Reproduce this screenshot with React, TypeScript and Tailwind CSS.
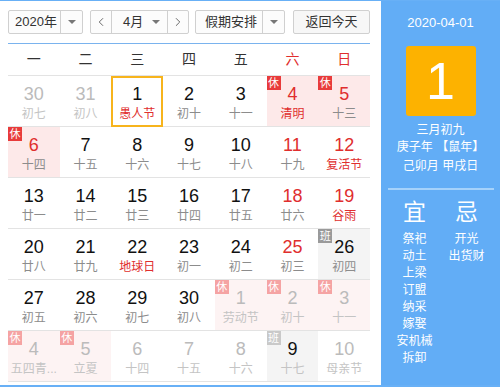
import { ChevronLeft, ChevronRight } from "lucide-react";

type Cell = {
  d: number;
  l: string;
  other?: boolean;
  redNum?: boolean;
  redLunar?: boolean;
  badge?: "休" | "班";
  today?: boolean;
  dark?: boolean;
};

const rows: Cell[][] = [
  [
    { d: 30, l: "初七", other: true },
    { d: 31, l: "初八", other: true },
    { d: 1, l: "愚人节", today: true, redLunar: true },
    { d: 2, l: "初十" },
    { d: 3, l: "十一" },
    { d: 4, l: "清明", badge: "休", redNum: true, redLunar: true },
    { d: 5, l: "十三", badge: "休", redNum: true },
  ],
  [
    { d: 6, l: "十四", badge: "休", redNum: true },
    { d: 7, l: "十五" },
    { d: 8, l: "十六" },
    { d: 9, l: "十七" },
    { d: 10, l: "十八" },
    { d: 11, l: "十九", redNum: true },
    { d: 12, l: "复活节", redNum: true, redLunar: true },
  ],
  [
    { d: 13, l: "廿一" },
    { d: 14, l: "廿二" },
    { d: 15, l: "廿三" },
    { d: 16, l: "廿四" },
    { d: 17, l: "廿五" },
    { d: 18, l: "廿六", redNum: true },
    { d: 19, l: "谷雨", redNum: true, redLunar: true },
  ],
  [
    { d: 20, l: "廿八" },
    { d: 21, l: "廿九" },
    { d: 22, l: "地球日", redLunar: true },
    { d: 23, l: "初一" },
    { d: 24, l: "初二" },
    { d: 25, l: "初三", redNum: true },
    { d: 26, l: "初四", badge: "班" },
  ],
  [
    { d: 27, l: "初五" },
    { d: 28, l: "初六" },
    { d: 29, l: "初七" },
    { d: 30, l: "初八" },
    { d: 1, l: "劳动节", other: true, badge: "休" },
    { d: 2, l: "初十", other: true, badge: "休" },
    { d: 3, l: "十一", other: true, badge: "休" },
  ],
  [
    { d: 4, l: "五四青...", other: true, badge: "休" },
    { d: 5, l: "立夏", other: true, badge: "休" },
    { d: 6, l: "十四", other: true },
    { d: 7, l: "十五", other: true },
    { d: 8, l: "十六", other: true },
    { d: 9, l: "十七", other: true, badge: "班", dark: true },
    { d: 10, l: "母亲节", other: true },
  ],
];

const weekdays = ["一", "二", "三", "四", "五", "六", "日"];
const yi = ["祭祀", "动土", "上梁", "订盟", "纳采", "嫁娶", "安机械", "拆卸"];
const ji = ["开光", "出货财"];

function Caret() {
  return <span className="w-0 h-0 border-l-[4px] border-r-[4px] border-t-[4px] border-l-transparent border-r-transparent border-t-[#777]" />;
}

function DayCell({ c }: { c: Cell }) {
  let bg = "";
  if (c.badge === "休") bg = c.other ? "bg-[#fdf3f3]" : "bg-[#fde9e9]";
  if (c.badge === "班") bg = "bg-[#f4f4f4]";

  let num = "text-[#111]";
  if (c.other && !c.dark) num = "text-[#bbbbbb]";
  else if (c.redNum) num = "text-[#e02e2e]";

  let lunar = "text-[#8c8c8c]";
  if (c.other) lunar = "text-[#c4c4c4]";
  else if (c.redLunar) lunar = "text-[#e02e2e]";

  let badge = "";
  if (c.badge === "休") badge = c.other ? "bg-[#f5a3a3]" : "bg-[#e83b3b]";
  if (c.badge === "班") badge = c.other ? "bg-[#c9c9c9]" : "bg-[#9a9a9a]";

  return (
    <div className={`relative flex flex-col items-center h-[50px] ${bg}`}>
      {c.badge && (
        <span className={`absolute left-0 top-0 w-[14px] h-[14px] flex items-center justify-center text-[11px] leading-none text-white ${badge}`}>
          {c.badge}
        </span>
      )}
      {c.today && <span className="absolute inset-x-0 top-0 h-[51px] border-2 border-[#f7b41c]" />}
      <span className={`mt-[6px] text-[18px] leading-[24px] ${num}`}>{c.d}</span>
      <span className={`text-[12px] leading-[16px] ${lunar}`}>{c.l}</span>
    </div>
  );
}

export default function App() {
  return (
    <div
      className="w-[500px] h-[387px] flex border-t border-b-2 border-[#68b0f6] bg-white overflow-hidden"
      style={{ fontFamily: '"Liberation Sans", "Noto Sans CJK SC", sans-serif' }}
    >
      <div className="w-[381px] pl-2 pr-[11px] pt-[9px]">
        <div className="flex items-center h-6 text-[13px] text-[#333]">
          <div className="flex h-6 w-[75px] border border-[#d0d0d0] rounded-[2px] bg-[#fcfcfc]">
            <span className="flex-1 flex items-center pl-[6px]">2020年</span>
            <span className="w-[22px] border-l border-[#d0d0d0] flex items-center justify-center"><Caret /></span>
          </div>
          <div className="flex h-6 w-[99px] ml-[7px] border border-[#d0d0d0] rounded-[2px] bg-[#fcfcfc]">
            <span className="w-[21px] flex items-center justify-center border-r border-[#d0d0d0]">
              <ChevronLeft size={14} strokeWidth={1.5} color="#555" />
            </span>
            <span className="flex-1 flex items-center pl-[11px] pr-[7px] justify-between">4月<Caret /></span>
            <span className="w-[21px] flex items-center justify-center border-l border-[#d0d0d0]">
              <ChevronRight size={14} strokeWidth={1.5} color="#555" />
            </span>
          </div>
          <div className="flex h-6 w-[90px] ml-[6px] border border-[#d0d0d0] rounded-[2px] bg-[#fcfcfc]">
            <span className="flex-1 flex items-center pl-[9px]">假期安排</span>
            <span className="w-[22px] border-l border-[#d0d0d0] flex items-center justify-center"><Caret /></span>
          </div>
          <div className="flex h-6 w-[77px] ml-[8px] border border-[#d0d0d0] rounded-[2px] bg-[#f7f7f7] items-center justify-center">
            返回今天
          </div>
        </div>
        <div className="mt-[9px] border-t border-[#7ab3ee]" />
        <div className="grid grid-cols-7 h-[32px] items-center border-b border-[#e3e3e3] text-[14px]">
          {weekdays.map((w, i) => (
            <span key={w} className={`text-center ${i > 4 ? "text-[#e02e2e]" : "text-[#333]"}`}>{w}</span>
          ))}
        </div>
        {rows.map((r, i) => (
          <div key={i} className="grid grid-cols-7 border-b border-[#e3e3e3]">
            {r.map((c, j) => (
              <DayCell key={j} c={c} />
            ))}
          </div>
        ))}
      </div>
      <div className="flex-1 bg-[#62adf6] text-white flex flex-col items-center">
        <div className="mt-[13px] text-[13px] leading-[18px]">2020-04-01</div>
        <div className="mt-[14px] w-[70px] h-[70px] rounded-[3px] bg-[#fdb200] flex items-center justify-center text-[52px] font-light leading-none">
          1
        </div>
        <div className="mt-[6px] text-[12px] leading-[17px] text-center">
          <div>三月初九</div>
          <div>庚子年 【鼠年】</div>
          <div className="mt-[2px]">己卯月 甲戌日</div>
        </div>
        <div className="mt-[13px] w-[106px] border-t-2 border-[#a5d2fb]" />
        <div className="mt-[8px] flex w-[102px] justify-between text-[12px] leading-[17px]">
          <div className="flex flex-col items-center w-[50px]">
            <div className="text-[23px] leading-[28px] mb-[5px]">宜</div>
            {yi.map((t) => (
              <div key={t}>{t}</div>
            ))}
          </div>
          <div className="flex flex-col items-center w-[50px]">
            <div className="text-[23px] leading-[28px] mb-[5px]">忌</div>
            {ji.map((t) => (
              <div key={t}>{t}</div>
            ))}
          </div>
        </div>
      </div>
    </div>
  );
}
